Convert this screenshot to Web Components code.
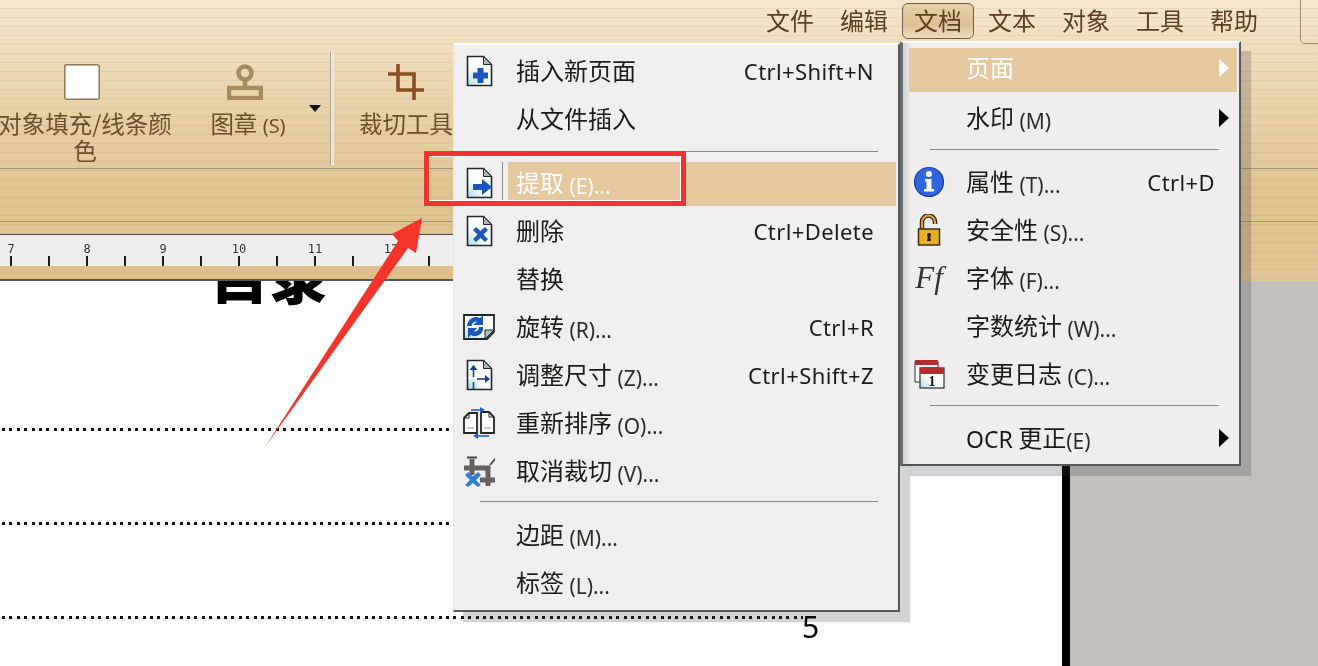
<!DOCTYPE html>
<html lang="zh"><head><meta charset="utf-8"><title>文档菜单</title>
<style>
html,body{margin:0;padding:0;background:#fff}
.l{font:21px "Noto Sans","Noto Sans CJK SC",sans-serif;opacity:.92;position:relative;top:2px}
</style></head><body>
<svg width="0" height="0" style="position:absolute"><defs>
<linearGradient id="pg" x1="0" y1="1" x2=".7" y2=".3"><stop offset="0" stop-color="#a9dbe6"/><stop offset=".55" stop-color="#f6fbfb"/><stop offset="1" stop-color="#fff"/></linearGradient>
<symbol id="page" viewBox="0 0 32 32"><path d="M4.5 1.5H20.5L28.5 9.5V30.5H4.5Z" fill="url(#pg)" stroke="#20262c" stroke-width="1.6"/><path d="M20.5 1.5L28.5 9.5H20.5Z" fill="#a8b8b4" stroke="#20262c" stroke-width="1"/></symbol>
</defs></svg>

<app-shell>
  <top-chrome>
    <menu-bar>
      <bar-item>文件</bar-item><bar-item>编辑</bar-item><bar-item open>文档</bar-item><bar-item>文本</bar-item><bar-item>对象</bar-item><bar-item>工具</bar-item><bar-item>帮助</bar-item>
    </menu-bar>
    <tool-ribbon>
      <tool-button style="width:176px;margin-left:-3px">
        <svg slot="icon" width="36" height="36" viewBox="0 0 36 36" style="margin-right:6px"><rect x=".75" y=".75" width="34.5" height="34.5" rx="2" fill="#fff" stroke="#96764f" stroke-width="1.5"/></svg>
        对象填充/线条颜色
      </tool-button>
      <tool-button style="width:122px;margin-left:14px">
        <svg slot="icon" width="36" height="36" viewBox="0 0 36 36" style="margin-right:6px"><g fill="none" stroke="#a88a5f" stroke-width="4.500"><circle cx="18" cy="9" r="6.500"/><path d="M18 16V23"/><rect x="2" y="24" width="32" height="10"/></g><rect x="4.500" y="26.500" width="27" height="5" fill="#e8d3ab"/></svg>
        图章 <span style="font:20px 'Noto Sans',sans-serif">(S)</span>
      </tool-button>
      <drop-caret></drop-caret>
      <ribbon-sep></ribbon-sep>
      <tool-button style="width:96px;margin-left:24px">
        <svg slot="icon" width="36" height="36" viewBox="0 0 36 36"><path d="M10 0V26H36M0 10H26V36" fill="none" stroke="#8a4c24" stroke-width="3.600"/></svg>
        裁切工具
      </tool-button>
    </tool-ribbon>
    <ribbon-band></ribbon-band>
    <page-ruler></page-ruler>
  </top-chrome>

  <doc-view>
    <doc-title>目录</doc-title>
    <toc-line></toc-line>
    <toc-line></toc-line>
    <toc-line page="5"></toc-line>
  </doc-view>

  <context-menu style="left:453px;top:43px;width:447px;--sep-l:25px;--sep-r:18px;--hl-b:1px">
    <menu-item gutter>
      <svg slot="icon" width="32" height="32" viewBox="0 0 32 32"><use href="#page"/><path d="M14.500 13h6v4.500h4.500v6h-4.500v4.500h-6v-4.500h-4.500v-6h4.500z" fill="#1b56bf"/></svg>
      插入新页面<span slot="key">Ctrl+Shift+N</span>
    </menu-item>
    <menu-item gutter>从文件插入</menu-item>
    <menu-sep></menu-sep>
    <menu-item gutter active>
      <svg slot="icon" width="32" height="32" viewBox="0 0 32 32"><use href="#page"/><path d="M10 17h9v-5l10 8-10 8v-5h-9z" fill="#1b56bf"/></svg>
      提取 <span class="l">(E)...</span>
    </menu-item>
    <menu-item gutter>
      <svg slot="icon" width="32" height="32" viewBox="0 0 32 32"><use href="#page"/><path d="M10 15l3-3 4.500 4 4.500-4 3 3-4.500 4.500 4.500 4.500-3 3-4.500-4-4.500 4-3-3 4.500-4.500z" fill="#1b56bf"/></svg>
      删除<span slot="key">Ctrl+Delete</span>
    </menu-item>
    <menu-item gutter>替换</menu-item>
    <menu-item gutter>
      <svg slot="icon" width="32" height="32" viewBox="0 0 32 32"><path d="M1 4H31V21L24 28H1Z" fill="url(#pg)" stroke="#20262c" stroke-width="1.800"/><path d="M31 19H22V28Z" fill="#a8c4c0" stroke="#20262c"/><path d="M4 15A9 9 0 0 1 17 7L20 4V14H10L14 10.500A5 5 0 0 0 8.500 15ZM20 16A8 8 0 0 1 8 24L5 27V17H14L11 20.500A5 5 0 0 0 16 16Z" fill="#1b56bf"/></svg>
      旋转 <span class="l">(R)...</span><span slot="key">Ctrl+R</span>
    </menu-item>
    <menu-item gutter>
      <svg slot="icon" width="32" height="32" viewBox="0 0 32 32"><use href="#page"/><path d="M5 19H27" stroke="#fff" stroke-width="1" fill="none"/><path d="M10.500 7V18M10.500 23V30" stroke="#1b3f86" stroke-width="1.600"/><path d="M6.500 11l4-5 4 5z" fill="#1b3f86"/><path d="M14 20H25" stroke="#1b3f86" stroke-width="1.600"/><path d="M22 16l5 4-5 4z" fill="#1b3f86"/></svg>
      调整尺寸 <span class="l">(Z)...</span><span slot="key">Ctrl+Shift+Z</span>
    </menu-item>
    <menu-item gutter>
      <svg slot="icon" width="32" height="32" viewBox="0 0 32 32"><g fill="#fff" stroke="#20262c" stroke-width="1.800"><path d="M1 11L6 6H14V26H1Z"/><path d="M18 5H26L31 10V26H18Z"/></g><path d="M1 11H6V6M26 5V10H31" fill="none" stroke="#20262c"/><path d="M4 21H11M21 21H28" stroke="#8a9a9a"/><path d="M8 3H18" stroke="#1f5fc0" stroke-width="1.600"/><path d="M17 0l5 3-5 3z" fill="#1f5fc0"/><path d="M14 29H26" stroke="#1f5fc0" stroke-width="1.600"/><path d="M15 26l-5 3 5 3z" fill="#1f5fc0"/></svg>
      重新排序 <span class="l">(O)...</span>
    </menu-item>
    <menu-item gutter>
      <svg slot="icon" width="32" height="32" viewBox="0 0 32 32"><path d="M1 13H27M9 4V20M25 11V31M17 25H33" fill="none" stroke="#66605e" stroke-width="5"/><path d="M4 2.500h10M27 10L33 3" stroke="#444" stroke-width="1.800"/><path d="M2 20l3-3 5 4.500 5-4.500 3 3-5 5 5 5-3 2-5-4-5 4-3-2 5-5z" fill="#2f7fd0"/></svg>
      取消裁切 <span class="l">(V)...</span>
    </menu-item>
    <menu-sep style="--at:6px"></menu-sep>
    <menu-item gutter>边距 <span class="l">(M)...</span></menu-item>
    <menu-item gutter>标签 <span class="l">(L)...</span></menu-item>
  </context-menu>

  <context-menu second style="left:900px;top:41px;width:341px;--sep-l:21px;--sep-r:18px;--hl-b:0px;--text-at:57px">
    <menu-item active sub>页面</menu-item>
    <menu-item sub style="margin-top:2px">水印 <span class="l">(M)</span></menu-item>
    <menu-sep style="--at:7px"></menu-sep>
    <menu-item>
      <svg slot="icon" width="32" height="32" viewBox="0 0 32 32"><circle cx="16" cy="16" r="14.500" fill="#2f66e0" stroke="#1d3f9c" stroke-width="1.200"/><circle cx="16" cy="8" r="3" fill="#fff"/><path d="M12 13h6.500v10h2.500v2.500H11V23h2.500v-7.500H12z" fill="#fff"/></svg>
      属性 <span class="l">(T)...</span><span slot="key">Ctrl+D</span>
    </menu-item>
    <menu-item>
      <svg slot="icon" width="32" height="32" viewBox="0 0 32 32"><path d="M9 15V8A6.500 6.500 0 0 1 22 8V10" fill="none" stroke="#2a2320" stroke-width="4.500"/><path d="M9 15V8A6.500 6.500 0 0 1 22 8V10" fill="none" stroke="#e9a72a" stroke-width="2.200"/><rect x="5.500" y="15" width="21" height="16" fill="#e7b020" stroke="#3a2c14" stroke-width="1.500"/><path d="M16 19a2 2 0 0 1 1.200 3.600L18 27h-4l.8-4.400A2 2 0 0 1 16 19z" fill="#2a1c10"/></svg>
      安全性 <span class="l">(S)...</span>
    </menu-item>
    <menu-item>
      <span slot="icon" style="font:italic 31px/32px 'Liberation Serif',serif;color:#333;width:32px;display:block;white-space:nowrap;text-align:center">Ff</span>
      字体 <span class="l">(F)...</span>
    </menu-item>
    <menu-item>字数统计 <span class="l">(W)...</span></menu-item>
    <menu-item>
      <svg slot="icon" width="32" height="32" viewBox="0 0 32 32"><path d="M2 3.500H25V10H8V24H2Z" fill="#fff" stroke="#2c2a2a"/><rect x="2" y="2" width="23" height="5" fill="#b42c2c"/><rect x="7" y="10" width="24" height="20" fill="url(#pg)" stroke="#2c2a2a" stroke-width="1.200"/><rect x="7" y="10" width="24" height="6" fill="#b42c2c"/><text x="19" y="28" text-anchor="middle" font-family="Liberation Serif,serif" font-weight="700" font-size="14" fill="#111">1</text></svg>
      变更日志 <span class="l">(C)...</span>
    </menu-item>
    <menu-sep style="--at:7px"></menu-sep>
    <menu-item sub><span class="l" style="font-size:23px;opacity:1;top:1px">OCR</span> 更正<span class="l">(E)</span></menu-item>
  </context-menu>

  <annotation-mark></annotation-mark>
  <corner-tab></corner-tab>
</app-shell>

<script>
function def(name, css, html, init){
  customElements.define(name, class extends HTMLElement{
    constructor(){super();const r=this.attachShadow({mode:'open'});r.innerHTML='<style>'+css+'</style>'+(html||'<slot></slot>');}
    connectedCallback(){ if(init) init.call(this,this.shadowRoot); }
  });
}
const CJK='"Noto Sans CJK SC","Noto Sans",sans-serif';

def('app-shell',`:host{display:block;position:relative;width:1318px;height:666px;overflow:hidden;font-family:${CJK};background:#fff;filter:blur(.35px)}`);

def('top-chrome',`:host{display:flex;flex-direction:column;height:281px;box-sizing:border-box;
 background:
  repeating-linear-gradient(180deg,rgba(255,255,255,0) 0 8px,rgba(130,95,50,.09) 8px 9px),
  linear-gradient(180deg,#f6e6cb 0,#efdbb8 60px,#e6cda2 130px,#dfc391 200px,#e2c594 280px)}`);

def('menu-bar',`:host{display:flex;justify-content:flex-end;gap:2px;height:42px;padding:3px 48px 0 0;box-sizing:border-box;flex:none}`);
def('bar-item',`:host{display:flex;align-items:center;justify-content:center;width:72px;height:36px;box-sizing:border-box;font-size:24px;color:#5b3f22;border-radius:6px;border:1.500px solid transparent;padding-bottom:3px}
 :host([open]){border-color:#6f5b45;background:linear-gradient(180deg,#e6cfa6,#dcc094 60%,#efdcbc)}`);

def('tool-ribbon',`:host{display:flex;align-items:flex-start;flex:none;height:127px;padding-top:22px;box-sizing:border-box;border-bottom:1.500px solid #9a9484;color:#6b4e2e;font-size:23.500px}`);
def('tool-button',`:host{display:flex;flex-direction:column;align-items:center;text-align:center;line-height:27px;flex:none}
 .i{height:36px;margin-bottom:10px;display:flex;justify-content:center}`,`<div class="i"><slot name="icon"></slot></div><div><slot></slot></div>`);
def('drop-caret',`:host{flex:none;width:0;height:0;margin-top:41px;border:6px solid transparent;border-top:7px solid #111;border-bottom:0}`);
def('ribbon-sep',`:host{flex:none;width:3px;height:113px;margin:-12px 0 0 10px;background:#ede9df;box-shadow:-1px 0 0 #a9a08c}`);
def('ribbon-band',`:host{display:block;height:53px;box-sizing:border-box;border-bottom:1.500px solid #9a9484;flex:none;margin-bottom:12px}`);

def('page-ruler',`:host{display:block;width:1100px;flex:none;height:47px;box-sizing:border-box;border-top:1.500px solid #4c4c4c;background:#dfbe88;border-bottom:2px solid #4d5660}
 .w{height:31px;background:#efeded repeating-linear-gradient(90deg,#1c1c1c 0 2px,transparent 2px 38px) 10px bottom/100% 10px no-repeat;display:flex;overflow:hidden}
 .n{flex:none;width:76px;text-align:center;font:12px/1 "DejaVu Sans Mono",monospace;color:#333;padding-top:8px;height:20px}`,
 `<div class="w" id="w"></div>`,
 function(r){const w=r.getElementById('w');if(w.children.length)return;
   for(let i=7;i<=12;i++){const d=document.createElement('div');d.className='n';d.textContent=i;if(i==7)d.style.marginLeft='-27px';w.appendChild(d);}
 });

def('doc-view',`:host{display:flex;flex-direction:column;height:385px;width:1318px;overflow:hidden;box-sizing:border-box;
  background:linear-gradient(90deg,#fefdfe 0 1062px,#000 1062px 1070px,#c3c0bc 1070px)}`);
def('doc-title',`:host{display:block;flex:none;width:1062px;box-sizing:border-box;padding-left:210px;margin-top:-37px;height:60px;font-size:59px;line-height:60px;font-weight:900;color:#000}`);
def('toc-line',`:host{display:flex;align-items:flex-start;height:94px;flex:none;width:819px;padding-left:2px;box-sizing:border-box}
 .d{flex:none;width:801px;height:3px;background:repeating-linear-gradient(90deg,#111 0 3px,transparent 3px 7.400px)}
 .p{font:30px/1 "Noto Sans",sans-serif;color:#000;margin:-4px 0 0 -1px}`,
 `<div class="d"></div><div class="p" id="p"></div>`,
 function(r){r.getElementById('p').textContent=this.getAttribute('page')||'';
   if(this.previousElementSibling&&this.previousElementSibling.tagName==='DOC-TITLE')this.style.marginTop='124px';});

def('context-menu',`:host{position:absolute;display:block;box-sizing:border-box;padding:2px 2px 3px 1px;border-left:1px solid #e8e8e8;border-top:2px solid #fbfbfb;border-right:2px solid #55585a;border-bottom:2px solid #55585a;background:#f0eeee;box-shadow:10px 10px 1px rgba(60,60,70,.22)}
 :host([second]){padding:1px 2px 2px 6px;border-left:3px solid #6a6e72;border-top:2px solid #fafafa;background:linear-gradient(90deg,#d2d2d2,#efeded 8px)}`);

def('menu-item',`:host{display:flex;align-items:center;height:48px;box-sizing:border-box;padding-right:22px;font-size:24px;color:#1d1a1a;white-space:nowrap;--hl:#e5c89e}
 :host([active]){color:#fff;background:linear-gradient(var(--hl),var(--hl)) no-repeat right 0 bottom var(--hl-b,1px)/calc(100% - 53px) 44px}
 :host([active][gutter]){background:linear-gradient(#8a8a8a,#8a8a8a) no-repeat 47px 3px/1px 40px,linear-gradient(var(--hl),var(--hl)) no-repeat right 0 bottom var(--hl-b,1px)/calc(100% - 53px) 44px}
 :host([active]:not([gutter])){background:linear-gradient(var(--hl),var(--hl)) no-repeat 0 bottom/100% 44px}
 .g{flex:none;width:var(--text-at,61px);box-sizing:border-box;padding-left:8px;display:flex;align-items:center}
 :host(:not([gutter])) .g{padding-left:4px}
 .t{flex:1;display:block;padding-bottom:4px}
 .k{font:22px "Noto Sans",sans-serif;letter-spacing:.4px}
 .a{display:none;flex:none;width:0;height:0;margin:0 -14px 0 5px;border-left:10px solid #000;border-top:9px solid transparent;border-bottom:9px solid transparent}
 :host([sub]) .a{display:block}
 :host([active]) .a{border-left-color:#fff}`,
 `<div class="g"><slot name="icon"></slot></div><div class="t"><slot></slot></div><div class="k"><slot name="key"></slot></div><div class="a"></div>`);

def('menu-sep',`:host{display:block;height:16px;box-sizing:border-box;padding:var(--at,8px) var(--sep-r,18px) 0 var(--sep-l,25px)}
 i{display:block;height:1px;background:#8d8a88}`,`<i></i>`);

def('annotation-mark',`:host{position:absolute;left:0;top:0;width:0;height:0;display:block}
 svg{position:absolute;left:0;top:0;overflow:visible}
 .b{position:absolute;left:424px;top:151px;width:262px;height:55px;box-sizing:border-box;border:5px solid #f3332b;box-shadow:inset 0 0 0 1px #fff}`,
 `<div class="b"></div><svg width="500" height="500" viewBox="0 0 500 500"><polygon points="422,218 416,253 408,248 265,447 398,241 392,234" fill="#f6332b"/></svg>`);

def('corner-tab',`:host{position:absolute;right:-6px;top:-4px;width:24px;height:48px;box-sizing:border-box;border:1px solid #a08a6c;border-radius:0 0 0 5px;display:block}`);
</script>
</body></html>
